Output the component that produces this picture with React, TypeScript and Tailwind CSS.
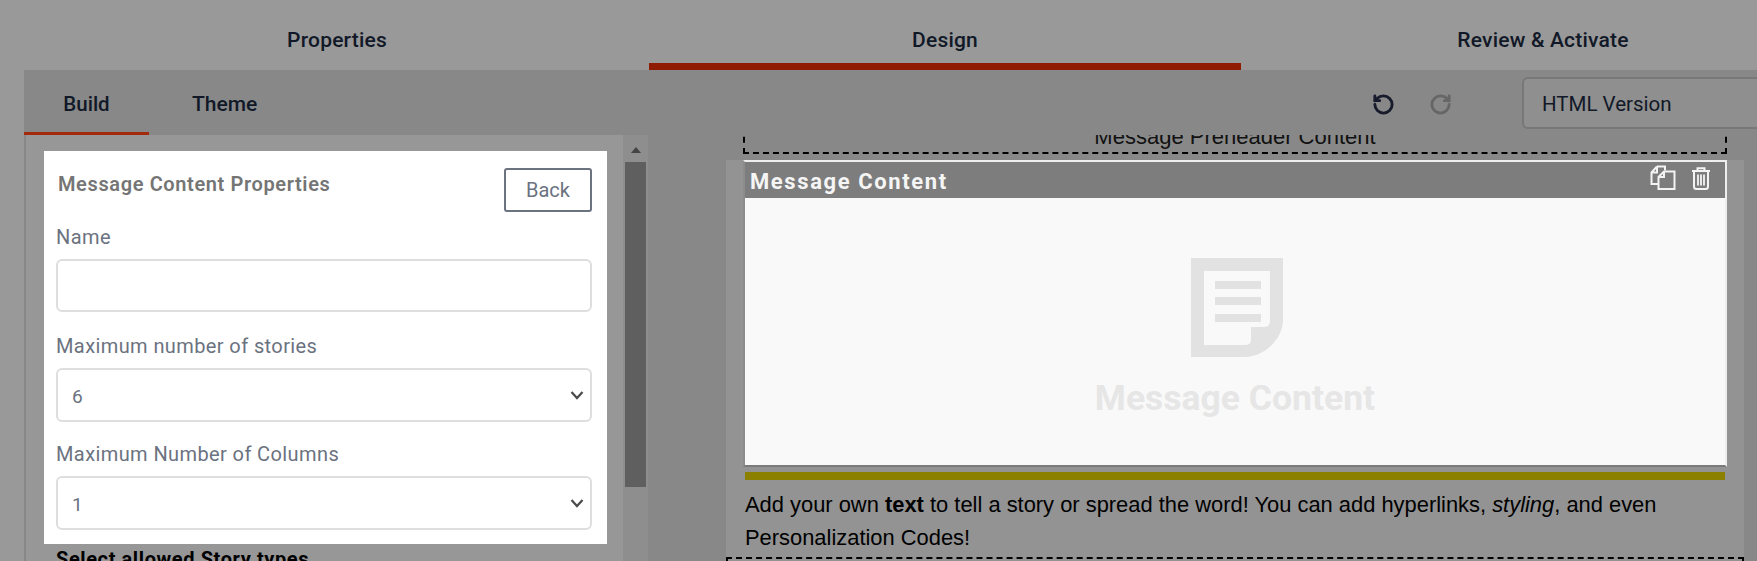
import React from 'react';
import { RotateCcw, RotateCw } from 'lucide-react';

const Chevron = () => (
  <svg className="pointer-events-none absolute right-[8px] top-1/2 -translate-y-1/2" width="14" height="10" viewBox="0 0 14 10" fill="none">
    <path d="M1.5 2 7 8l5.5-6" stroke="#4b4b4b" strokeWidth="2.2" />
  </svg>
);

const SelectField: React.FC<{ label: string; value: string; className: string }> = ({ label, value, className }) => (
  <div className={className}>
    <label className="block h-[24px] text-[20px] leading-[24px] tracking-[0.4px] text-[#6b7280]">{label}</label>
    <div className="relative mt-[10px]">
      <select
        defaultValue={value}
        className="block h-[54px] w-full appearance-none rounded-[6px] border-2 border-[#dedede] bg-white pl-[14px] pt-[4px] text-[19px] text-[#6b7280]"
      >
        <option value={value}>{value}</option>
      </select>
      <Chevron />
    </div>
  </div>
);

const CopyIcon = () => (
  <svg width="26" height="25" viewBox="0 0 26 25" fill="none" stroke="#f3f3f3" strokeWidth="2">
    <path d="M7 1.5h8v4M7 1.5 1.5 7.5V19H8M7 1.5V7.5H1.5" />
    <path d="M14 6.5h10.5v17.5H8.5V12zM14 6.5V12H8.5" />
  </svg>
);

const TrashIcon = () => (
  <svg width="20" height="24" viewBox="0 0 20 24" fill="none" stroke="#f3f3f3" strokeWidth="2">
    <path d="M1 5h18M6.5 5V2.2h7V5M3 5v15.5q0 2.5 2.5 2.5h9q2.5 0 2.5-2.5V5" />
    <path d="M7 8.5v11M10 8.5v11M13 8.5v11" strokeWidth="1.8" />
  </svg>
);

const DocIcon = () => (
  <svg width="92" height="99" viewBox="0 0 92 99">
    <path d="M0 0h92v62C92 80 74 99 54 99H0z" fill="#e2e2e2" />
    <path d="M13 13h66v50q0 6-6 6H60v13q0 5-6 5H13z" fill="#f9f9f9" />
    <path d="M24 23h46v8H24zM24 39h46v8H24zM24 56h46v8H24z" fill="#e2e2e2" />
  </svg>
);

export default function App() {
  return (
    <div className="flex h-[561px] w-full flex-col overflow-hidden bg-[#999999] font-['Roboto',sans-serif]">
      {/* Steps */}
      <div className="flex h-[70px] shrink-0 pl-[25px] text-[21px] font-medium tracking-[0.2px] text-[#111827]">
        <div className="w-[624px] shrink-0 pt-[25px] text-center leading-[30px]">Properties</div>
        <div className="w-[592px] shrink-0 border-b-[7px] border-[#8f1c00] pt-[25px] text-center leading-[30px]">Design</div>
        <div className="w-[604px] shrink-0 pt-[25px] text-center leading-[30px]">Review &amp; Activate</div>
      </div>

      <div className="ml-[24px] flex min-h-0 flex-1 flex-col bg-[#888888]">
        {/* Toolbar */}
        <div className="flex h-[65px] shrink-0 text-[#111827]">
          <div className="flex h-full w-[125px] items-center justify-center border-b-[3px] border-[#a32a0c] pt-[6px] text-[20.5px] font-medium">Build</div>
          <div className="ml-[43px] flex h-full items-center pb-[3px] pt-[8px] text-[21px] font-medium">Theme</div>
          <div className="ml-auto flex items-center">
            <RotateCcw size={23} strokeWidth={3} className="mt-[4px] text-[#171b2b]" />
            <RotateCw size={23} strokeWidth={3} className="ml-[34px] mr-[70px] mt-[4px] text-[#666666]" />
            <div className="flex h-[52px] w-[235px] items-center rounded-l-[6px] border-2 border-r-0 border-[#787878] bg-[#8f8f8f] pl-[18px] pt-[4px] text-[20.5px]">
              HTML Version
            </div>
          </div>
        </div>

        <div className="flex min-h-0 flex-1">
          {/* Build panel */}
          <div className="ml-[2px] h-full w-[597px] shrink-0 overflow-hidden bg-[#979797] pl-[18px] pt-[16px]">
            <div className="h-[393px] w-[563px] bg-white pl-[12px] pr-[15px] pt-[17px]">
              <div className="flex items-start justify-between">
                <div className="pl-[2px] pt-[3px] text-[20px] font-semibold leading-[26px] tracking-[0.62px] text-[#757575]">Message Content Properties</div>
                <button className="h-[44px] w-[88px] rounded-[3px] border-2 border-[#6b7280] text-[20px] text-[#6b7280]">Back</button>
              </div>
              <label className="mt-[13px] block h-[24px] text-[20px] leading-[24px] tracking-[0.4px] text-[#6b7280]">Name</label>
              <input className="mt-[10px] block h-[53px] w-full rounded-[6px] border-2 border-[#dedede] bg-white" />
              <SelectField label="Maximum number of stories" value="6" className="mt-[22px]" />
              <SelectField label="Maximum Number of Columns" value="1" className="mt-[20px]" />
            </div>
            <div className="mt-[3px] pl-[12px] text-[20px] font-bold leading-[24px] tracking-[0.6px] text-black">Select allowed Story types</div>
          </div>

          {/* Scrollbar */}
          <div className="flex w-[25px] shrink-0 flex-col items-center bg-[#8e8e8e] pt-[12px]">
            <div className="h-0 w-0 border-x-[5px] border-b-[6px] border-x-transparent border-b-[#444444]" />
            <div className="mt-[9px] h-[325px] w-[21px] bg-[#5f5f5f]" />
          </div>

          {/* Preview */}
          <div className="min-w-0 flex-1 overflow-hidden pl-[78px]">
            <div className="-mt-[21px] mr-[13px] bg-[#939393] font-['Liberation_Sans',sans-serif]">
              <div className="bg-[#888888] px-[17px]">
                <div className="h-[40px] border-x-2 border-b-2 border-dashed border-black text-center text-[22px] leading-[46px] text-[#111111] shadow-[0_2px_0_#f2f2f2]">
                  Message Preheader Content
                </div>
              </div>
              <div className="h-[6px] bg-[#888888]" />
              <div className="px-[17px]">
                <div className="border-2 border-b-[#7a7a7a] border-l-[#8c8c8c] border-r-[#eeeeee] border-t-[#eeeeee]">
                  <div className="flex h-[36px] items-center justify-between bg-[#7d7d7d] pl-[5px] pr-[14px] pt-[2px] font-['Roboto',sans-serif] text-[22px] font-bold tracking-[1.6px] text-[#f5f5f5]">
                    Message Content
                    <div className="flex items-center gap-[15px] pb-[7px]">
                      <CopyIcon />
                      <TrashIcon />
                    </div>
                  </div>
                  <div className="flex h-[267px] flex-col items-center bg-[#f9f9f9] pt-[60px]">
                    <div className="ml-[4px]">
                      <DocIcon />
                    </div>
                    <div className="mt-[23px] font-['Roboto',sans-serif] text-[35.5px] font-bold leading-[36px] text-[#e6e6e6]">Message Content</div>
                  </div>
                </div>
                <div className="mx-[2px] mt-[5px] h-[8px] bg-[#8c8000]" />
                <p className="mx-[2px] mt-[8px] text-[21.9px] leading-[33px] text-black">
                  Add your own <b>text</b> to tell a story or spread the word! You can add hyperlinks, <i>styling</i>, and even Personalization Codes!
                </p>
              </div>
              <div className="mt-[3px] h-[10px] border-x-2 border-t-2 border-dashed border-black" />
            </div>
          </div>
        </div>
      </div>
    </div>
  );
}
